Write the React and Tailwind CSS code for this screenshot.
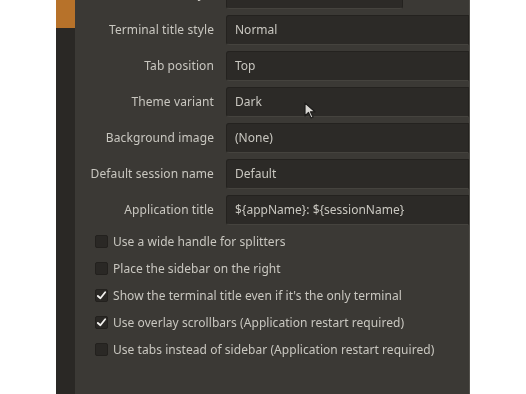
import React from "react";

const rows = [
  { label: "Window style", value: "Normal", short: true },
  { label: "Terminal title style", value: "Normal" },
  { label: "Tab position", value: "Top" },
  { label: "Theme variant", value: "Dark" },
  { label: "Background image", value: "(None)" },
  { label: "Default session name", value: "Default" },
  { label: "Application title", value: "${appName}: ${sessionName}" },
];

const checks = [
  { label: "Use a wide handle for splitters", on: false },
  { label: "Place the sidebar on the right", on: false },
  { label: "Show the terminal title even if it's the only terminal", on: true },
  { label: "Use overlay scrollbars (Application restart required)", on: true },
  { label: "Use tabs instead of sidebar (Application restart required)", on: false },
];

export default function App() {
  return (
    <div
      className="w-[526px] h-[394px] bg-white flex overflow-hidden blur-[0.7px]"
      style={{ fontFamily: '"Noto Sans", "DejaVu Sans", sans-serif' }}
    >
      <div className="w-[56px] shrink-0 bg-white" />
      <div className="w-[19px] shrink-0 flex flex-col bg-[#2a2825]">
        <div className="h-[28px] bg-[#b7722a]" />
      </div>
      <div className="w-[395px] shrink-0 bg-[#3b3935] relative flex flex-col border-r border-[#55534e] text-[12px] text-[#c9c7c0]">
        <div className="grid grid-cols-[139px_1fr] gap-x-3 gap-y-[6px] mt-[-21px]">
          {rows.map((r) => (
            <React.Fragment key={r.label}>
              <div className="h-[30px] flex items-center justify-end whitespace-nowrap tracking-[0.1px]">{r.label}</div>
              <div
                className={
                  "h-[30px] flex items-center pl-[8px] bg-[#2c2a27] border border-[#24221f] border-b-[#45433e] rounded-l-[3px] whitespace-nowrap " +
                  (r.short ? "w-[177px] rounded-r-[3px]" : "")
                }
              >
                {r.value}
              </div>
            </React.Fragment>
          ))}
        </div>
        <div className="flex flex-col mt-[3px] pl-[20px]">
          {checks.map((c) => (
            <div key={c.label} className="h-[27px] flex items-center gap-[5px] whitespace-nowrap">
              <div className="w-[13px] h-[13px] rounded-[2px] bg-[#2a2825] border border-[#23211e] flex items-center justify-center">
                {c.on && (
                  <svg width="11" height="11" viewBox="0 0 12 12">
                    <path d="M2 6.5 L4.8 9 L10 2.5" fill="none" stroke="#f2f1ee" strokeWidth="2" strokeLinecap="round" strokeLinejoin="round" />
                  </svg>
                )}
              </div>
              <span className="tracking-[0.05px]">{c.label}</span>
            </div>
          ))}
        </div>
        <svg className="absolute left-[229px] top-[102px]" width="14" height="18" viewBox="0 0 14 18">
          <path d="M1 1 L1 14 L4.5 10.5 L7 16 L9 15 L6.5 9.8 L11 9.8 Z" fill="#d8d6d2" stroke="#1e1d1b" strokeWidth="1.2" strokeLinejoin="round" />
        </svg>
      </div>
    </div>
  );
}
